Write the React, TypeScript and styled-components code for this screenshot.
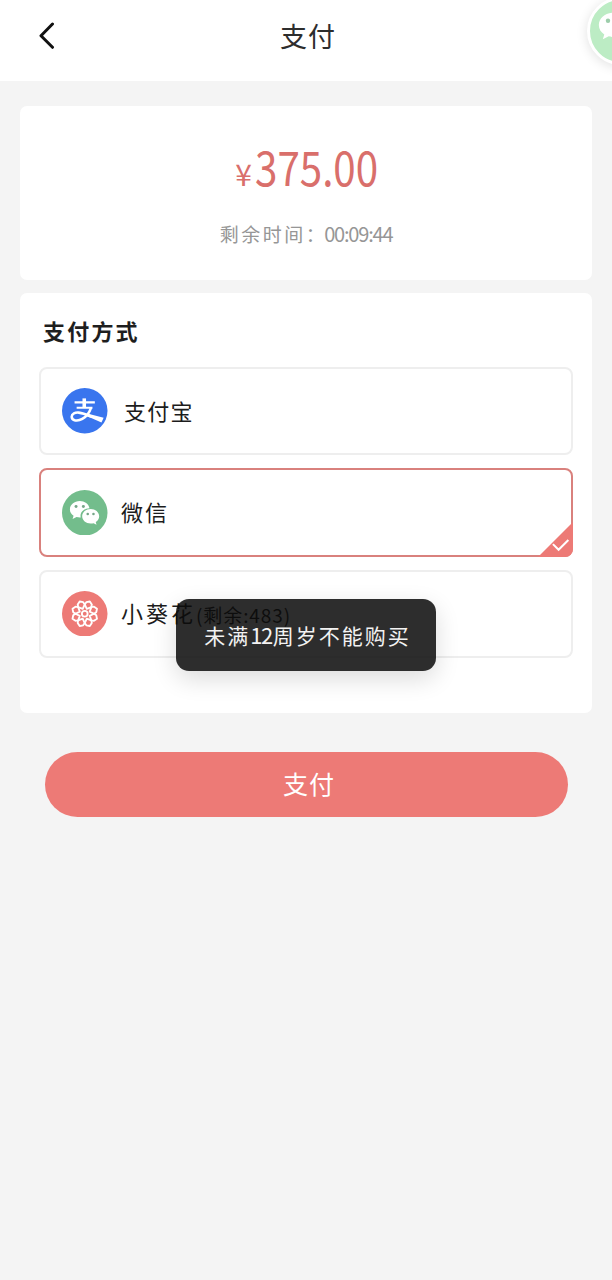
import React from "react";
import styled, { createGlobalStyle } from "styled-components";

const GlobalStyle = createGlobalStyle`
body {
  margin: 0;
  background-color: #f4f4f4;
  font-family: 'Noto Sans CJK SC', sans-serif;
}
`

const WechatShape = ({ eyes }: { eyes: string }) => (
    <>
        <path fill="#fff" d="M18 11.2c-5.600 0-10 3.700-10 8.400 0 2.700 1.400 4.900 3.700 6.400l-1 3.300 4-2c1.200.3 2.200.4 3.300.4h.9c-1.200-5.400 3.300-9.100 8.900-9.300-.8-4.100-4.900-7.200-9.800-7.200z"/>
        <path fill="#fff" d="M29 19.300c-4.800 0-8.600 3.200-8.600 7.300s3.800 7.300 8.600 7.300c1.100 0 2-.2 2.900-.4l3 1.600-.8-2.700c2.100-1.300 3.500-3.400 3.500-5.800 0-4.100-3.900-7.300-8.600-7.300z"/>
        <g fill={eyes}>
            <circle cx="14.200" cy="16.700" r="1.500"/>
            <circle cx="21.600" cy="16.700" r="1.500"/>
            <circle cx="26" cy="24.300" r="1.300"/>
            <circle cx="31.800" cy="24.300" r="1.300"/>
        </g>
    </>
)

const AlipayIcon = () => (
    <Icon viewBox="0 0 46 46">
        <circle cx="23" cy="23" r="23" fill="#3975ee"/>
        <g fill="none" stroke="#fff">
            <path strokeWidth="2.200" d="M12.700 14.500h20.500M14.800 20h16"/>
            <path strokeWidth="3.600" d="M22.500 10.500v9.500"/>
            <path strokeWidth="2.600" d="M29.300 20c-1.600 5-4.800 8.900-8.800 11.300-4.700 2.700-10.700 1.900-10.700-2.200 0-3.200 3.600-4.600 7.200-4.200 4.500.5 8.500 2.300 12.500 4"/>
        </g>
        <path fill="#fff" d="M26.500 26l15.600 4-2.200 5-15-6.800z"/>
    </Icon>
)

const WechatIcon = () => (
    <Icon viewBox="0 0 46 46">
        <circle cx="23" cy="23" r="23" fill="#73bd8c"/>
        <WechatShape eyes="#76a688"/>
    </Icon>
)

const petals = [22.5, 67.5, 112.5, 157.5, 202.5, 247.5, 292.5, 337.5];

const SunflowerIcon = () => (
    <Icon viewBox="0 0 46 46">
        <circle cx="23" cy="23" r="23" fill="#ed7a76"/>
        <g fill="none" stroke="#fff" strokeWidth="1.900" strokeLinejoin="round">
            <circle cx="23" cy="23" r="2.900"/>
            {petals.map((angle) => (
                <path key={angle} transform={`rotate(${angle} 23 23)`} d="M23 17.600L19.400 14.300 20 11.600 23 9.600l3 2 .6 2.700z"/>
            ))}
        </g>
    </Icon>
)

const App = () => {
return(
    <>
    <GlobalStyle/>
    <Page>
        <Header>
            <Back viewBox="0 0 16 28">
                <path d="M13.500 2L2 13.700l11.500 11.600"/>
            </Back>
            <Title>支付</Title>
            <Float>
                <FloatIcon viewBox="0 0 46 46">
                    <WechatShape eyes="#9ccdaa"/>
                </FloatIcon>
            </Float>
        </Header>
        <Summary>
            <Price><Currency>¥</Currency><Amount>375.00</Amount></Price>
            <Countdown>剩余时间：<Clock>00:09:44</Clock></Countdown>
        </Summary>
        <Methods>
            <Subtitle>支付方式</Subtitle>
            <Options>
                <Option>
                    <AlipayIcon/>
                    <Name $indent={3}>支付宝</Name>
                </Option>
                <Option $active>
                    <WechatIcon/>
                    <Name $gap={2}>微信</Name>
                    <Corner viewBox="0 0 34 34">
                        <path fill="#ed7a76" d="M34 0v34H0z"/>
                        <path fill="none" stroke="#fff" strokeWidth="2" d="M14.500 21.500l5.500 5.500 9.500-9.500"/>
                    </Corner>
                </Option>
                <Option>
                    <SunflowerIcon/>
                    <Name $gap={3}>小葵花</Name>
                    <Balance>(剩余:483)</Balance>
                </Option>
            </Options>
        </Methods>
        <Pay>支付</Pay>
    </Page>
    <Toast>未满<Digits>12</Digits>周岁不能购买</Toast>
    </>
)
}
export default App;

const Page = styled.div`
width: 612px;
height: 1280px;
overflow: hidden;
display: flex;
flex-direction: column;
`

const Header = styled.div`
position: relative;
height: 81px;
padding-bottom: 9px;
box-sizing: border-box;
background-color: #ffffff;
display: flex;
align-items: center;
justify-content: center;
`

const Back = styled.svg`
position: absolute;
left: 39px;
top: 22px;
width: 16px;
height: 28px;
fill: none;
stroke: #111111;
stroke-width: 3;
stroke-linecap: round;
stroke-linejoin: round;
`

const Title = styled.div`
font-size: 27px;
line-height: 36px;
letter-spacing: 1px;
padding-left: 4px;
color: #2d2d2d;
`

const Float = styled.div`
position: absolute;
left: 587px;
top: -3px;
width: 68px;
height: 68px;
box-sizing: border-box;
border: 3px solid #ffffff;
border-radius: 50%;
background-color: #bcecc4;
box-shadow: 0 2px 12px rgba(0, 0, 0, 0.12);
`

const FloatIcon = styled.svg`
width: 68px;
height: 68px;
margin: -4px 0 0 -3px;
`

const Summary = styled.div`
margin: 25px 20px 0;
height: 174px;
box-sizing: border-box;
padding-top: 31px;
background-color: #ffffff;
border-radius: 7px;
display: flex;
flex-direction: column;
align-items: center;
gap: 17px;
`

const Price = styled.div`
height: 56px;
line-height: 56px;
color: #d96f6b;
display: flex;
align-items: baseline;
`

const Currency = styled.span`
font-size: 30px;
margin-right: 3px;
`

/* narrow numerals */
const Amount = styled.span`
width: 122px;
font-size: 48px;
transform: scaleX(0.84);
transform-origin: left;
`

const Countdown = styled.div`
font-size: 19px;
line-height: 48px;
letter-spacing: 2.500px;
color: #969696;
display: flex;
`

const Clock = styled.span`
font-size: 20px;
letter-spacing: -1.200px;
margin-left: -3px;
`

const Methods = styled.div`
margin: 13px 20px 0;
height: 420px;
box-sizing: border-box;
padding: 19px 19px 0;
background-color: #ffffff;
border-radius: 7px;
`

const Subtitle = styled.div`
padding-left: 4px;
font-size: 22px;
font-weight: 700;
line-height: 36px;
letter-spacing: 2.200px;
color: #1e1e1e;
`

const Options = styled.div`
margin-top: 19px;
display: flex;
flex-direction: column;
gap: 13px;
`

const Option = styled.div<{ $active?: boolean }>`
position: relative;
height: 88.300px;
box-sizing: border-box;
padding-left: 21px;
border: 2px solid ${({ $active }) => ($active ? "#d9817d" : "#eeeeee")};
border-radius: 8px;
display: flex;
align-items: center;
`

const Icon = styled.svg`
flex: none;
width: 45.500px;
height: 45.500px;
margin-right: 13.500px;
`

const Name = styled.div<{ $indent?: number; $gap?: number }>`
padding-left: ${({ $indent }) => $indent || 0}px;
padding-bottom: 3px;
font-size: 22px;
line-height: 32px;
letter-spacing: ${({ $gap }) => $gap || 1.2}px;
color: #1c1c1c;
`

const Balance = styled.div`
padding-top: 2px;
font-size: 19px;
line-height: 32px;
letter-spacing: 0.900px;
color: #1c1c1c;
`

const Corner = styled.svg`
position: absolute;
right: -2px;
bottom: -2px;
width: 35px;
height: 35px;
border-bottom-right-radius: 8px;
`

const Pay = styled.div`
margin: 39px 44px 0 45px;
padding-left: 5px;
height: 65px;
border-radius: 33px;
background-color: #ed7a76;
font-size: 25px;
line-height: 63px;
letter-spacing: 1px;
text-align: center;
color: #ffffff;
`

const Toast = styled.div`
position: absolute;
left: 176px;
top: 599px;
width: 260px;
height: 72px;
box-sizing: border-box;
padding-left: 3px;
border-radius: 13px;
background-color: rgba(10, 10, 10, 0.86);
box-shadow: 0 8px 24px rgba(0, 0, 0, 0.14);
font-size: 21px;
line-height: 70px;
letter-spacing: 2px;
text-align: center;
white-space: nowrap;
color: #f2f2f2;
`

const Digits = styled.span`
font-size: 22px;
letter-spacing: -1.500px;
margin-right: 1px;
`
